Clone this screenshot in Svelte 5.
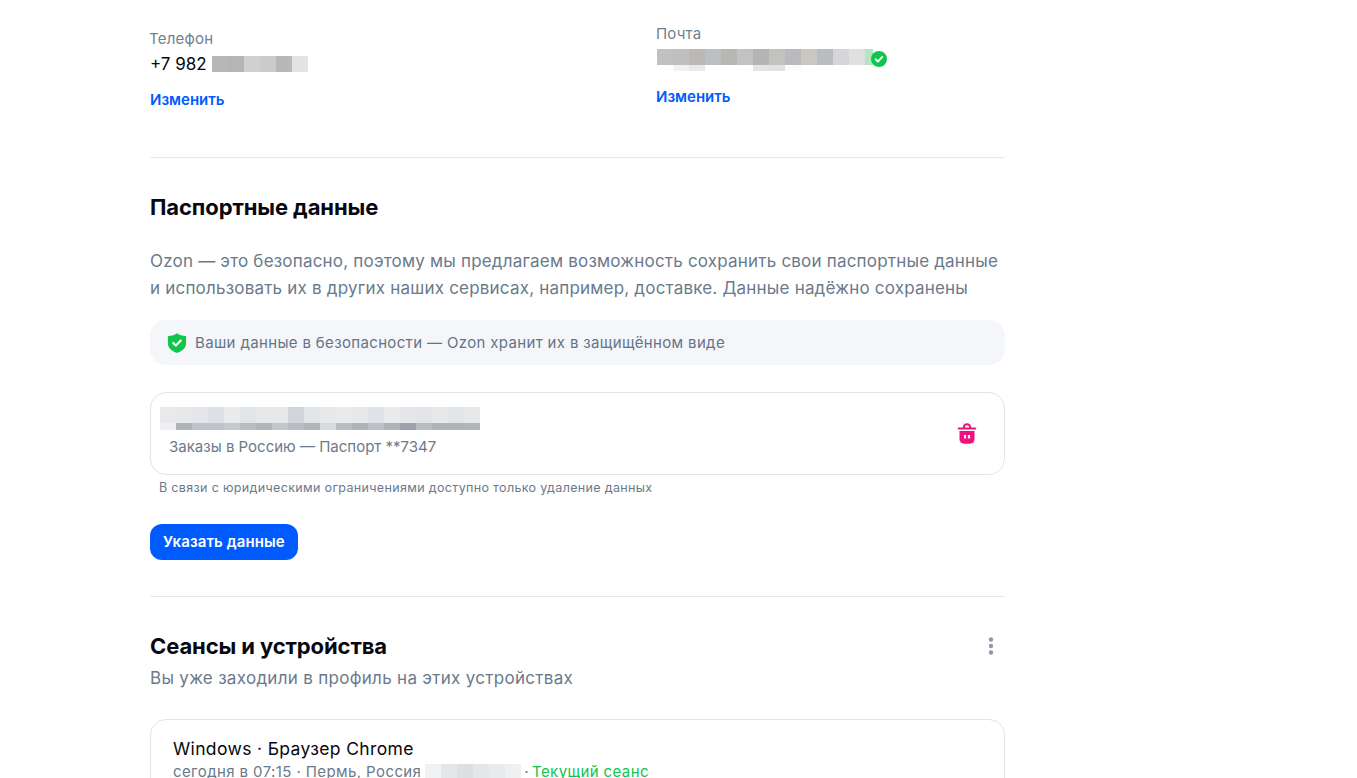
<script>
	const phoneCells = ["#b9b7b6", "#b4b5b6", "#d0d0d0", "#cbcbcb", "#b9b7b7", "#e3e3e4"];
	const mailTop = ["#c2c0c0", "#bfc0c2", "#bdb8b4", "#bcc0c2", "#b9b7b4", "#c2c2c2", "#b4b4b2", "#c4c2bf", "#b9babd", "#cbc7c0", "#b9bdc0", "#d6d6d9", "#e0e0e0"];
	const mailBottom = ["#fff", "#f2f2f2", "#e8e9ea", "#fff", "#fff", "#fff", "#e4e4e3", "#e2e1e0", "#fafbfc", "#fff", "#fff", "#fff", "#fff"];
	const nameTop = ["#e8e9eb", "#e6e8ea", "#e4e6e9", "#dde0e4", "#e8eaec", "#e2e5e8", "#e6e8ea", "#e6e8ea", "#d1d5d9", "#e2e5e8", "#e6e8ea", "#e8eaec", "#e6e8ea", "#dfe3e7", "#e8eaec", "#e4e6ea", "#e2e4e8", "#e6e8ea", "#e2e5e8", "#e6e8ea"];
	const nameBottom = ["#f0f0f2", "#aeb3ba", "#bec4cb", "#bec4cb", "#c4c9cf", "#b8bcc3", "#b0b5bc", "#c2c7ce", "#b8bdc4", "#b0b5bc", "#d8dbde", "#b8bdc4", "#aeb3ba", "#bac0c6", "#aeb3ba", "#9da3ae", "#b8bdc4", "#aeb3ba", "#aeb3ba", "#b0b5bc"];
	const ipCells = ["#f0f1f2", "#e4e6e8", "#dde0e3", "#e4e6e8", "#e8eaec", "#eef0f1"];
</script>

<main class="page">
	<section class="contacts">
		<div class="contact phone">
			<div class="label">Телефон</div>
			<div class="phone-value">
				<span>+7 982</span>
				<span class="blur">
					{#each phoneCells as c}<i style="background:{c}"></i>{/each}
				</span>
			</div>
			<a class="link" href="#phone">Изменить</a>
		</div>
		<div class="contact mail">
			<div class="label">Почта</div>
			<div class="mail-value">
				<div class="blur-stack">
					<span class="blur">
						{#each mailTop as c}<i style="background:{c}"></i>{/each}
						<i style="background:#b4e6c4; width:8px"></i>
					</span>
					<span class="blur thin">
						{#each mailBottom as c}<i style="background:{c}"></i>{/each}
					</span>
				</div>
				<svg class="check" width="16" height="16" viewBox="0 0 16 16">
					<circle cx="8" cy="8" r="8" fill="#10c44c" />
					<path d="M4.6 8.3l2.3 2.2 4.4-4.6" fill="none" stroke="#fff" stroke-width="1.9" stroke-linecap="round" stroke-linejoin="round" />
				</svg>
			</div>
			<a class="link" href="#mail">Изменить</a>
		</div>
	</section>

	<hr class="first-rule" />

	<section class="passport">
		<h2>Паспортные данные</h2>
		<p class="lead">Ozon — это безопасно, поэтому мы предлагаем возможность сохранить свои паспортные данные и использовать их в других наших сервисах, например, доставке. Данные надёжно сохранены</p>
		<div class="safe">
			<svg width="20" height="22" viewBox="0 0 20 22">
				<path d="M10 1.2c2.6 1.7 5.200 2.600 8.300 2.900.5.100.8.400.8.900v6c0 4.600-3.400 8-8.500 9.700-.4.100-.8.100-1.200 0C4.300 19 .9 15.600.9 11V5c0-.5.300-.8.800-.9 3.100-.3 5.700-1.200 8.300-2.900z" fill="#10c44c" />
				<path d="M6.200 10.900l2.700 2.600 4.900-5" fill="none" stroke="#fff" stroke-width="2.100" stroke-linecap="round" stroke-linejoin="round" />
			</svg>
			<span>Ваши данные в безопасности — Ozon хранит их в защищённом виде</span>
		</div>
		<div class="doc">
			<div class="doc-info">
				<div class="blur-stack name">
					<span class="blur">
						{#each nameTop as c}<i style="background:{c}"></i>{/each}
					</span>
					<span class="blur thin">
						{#each nameBottom as c}<i style="background:{c}"></i>{/each}
					</span>
				</div>
				<div class="doc-sub">Заказы в Россию — Паспорт **7347</div>
			</div>
			<svg class="trash" width="20" height="22" viewBox="0 0 20 22">
				<path d="M6.800 5c0-2.300 1.300-3.700 3.200-3.700s3.200 1.400 3.200 3.700" fill="none" stroke="#f1117e" stroke-width="2" />
				<path d="M1.800 5.500h16.400" stroke="#f1117e" stroke-width="2.200" stroke-linecap="round" />
				<path d="M2.500 8h15v8c0 2.800-1.900 4.700-4.700 4.700H7.200c-2.800 0-4.700-1.900-4.700-4.700z" fill="#f1117e" />
				<path d="M8 12v3.500M12 12v3.500" stroke="#fff" stroke-width="2.200" />
			</svg>
		</div>
		<div class="legal">В связи с юридическими ограничениями доступно только удаление данных</div>
		<button class="primary">Указать данные</button>
	</section>

	<hr class="second-rule" />

	<section class="sessions">
		<div class="sessions-head">
			<h2>Сеансы и устройства</h2>
			<svg width="8" height="20" viewBox="0 0 8 20">
				<circle cx="4" cy="3.500" r="2.200" fill="#8e98a8" />
				<circle cx="4" cy="10" r="2.200" fill="#8e98a8" />
				<circle cx="4" cy="16.500" r="2.200" fill="#8e98a8" />
			</svg>
		</div>
		<p class="sessions-sub">Вы уже заходили в профиль на этих устройствах</p>
		<div class="session">
			<div class="session-title">Windows · Браузер Chrome</div>
			<div class="session-meta">
				<span>сегодня в 07:15 · Пермь, Россия</span>
				<span class="blur ip">
					{#each ipCells as c}<i style="background:{c}"></i>{/each}
				</span>
				<span>·</span>
				<span class="current">Текущий сеанс</span>
			</div>
		</div>
	</section>
</main>

<style>
	:global(body) {
		margin: 0;
		background: #fff;
		overflow: hidden;
	}

	.page {
		box-sizing: border-box;
		width: 855px;
		height: 778px;
		margin-left: 150px;
		overflow: hidden;
		font-family: Inter, "Noto Sans", sans-serif;
		color: #001a34;
	}

	.contacts {
		display: grid;
		grid-template-columns: 506px 1fr;
		height: 157px;
	}

	.contact {
		display: flex;
		flex-direction: column;
		align-items: flex-start;
	}

	.phone {
		padding-top: 30px;
	}

	.mail {
		padding-top: 25px;
	}

	.label {
		font-size: 15px;
		line-height: 18px;
		letter-spacing: 0.200px;
		color: #707f8d;
		margin-left: -1px;
	}

	.mail .label {
		margin-left: 0;
	}

	.phone-value {
		display: flex;
		align-items: center;
		gap: 5px;
		height: 24px;
		margin-top: 4px;
		font-size: 17px;
		color: #07070f;
	}

	.mail-value {
		display: flex;
		height: 22px;
		margin-top: 6px;
		margin-left: 1px;
	}

	.blur {
		display: flex;
	}

	.blur i {
		display: block;
		width: 16px;
		height: 16px;
	}

	.blur.thin i {
		height: 6px;
	}

	.blur-stack {
		display: flex;
		flex-direction: column;
	}

	.check {
		margin: 2px 0 0 -2px;
	}

	.link {
		font-size: 15px;
		font-weight: 600;
		line-height: 20px;
		color: #005bff;
		text-decoration: none;
	}

	.phone .link {
		margin-top: 14px;
	}

	.mail .link {
		margin-top: 16px;
	}

	hr {
		height: 1px;
		margin: 0;
		border: 0;
		background: #e4e7ee;
	}

	.passport {
		height: 438px;
		padding-top: 35px;
		box-sizing: border-box;
	}

	h2 {
		margin: 0;
		font-size: 22px;
		font-weight: 700;
		line-height: 28px;
		letter-spacing: -0.100px;
		color: #07070f;
	}

	.lead {
		margin: 27px 0 0;
		font-size: 17px;
		line-height: 27px;
		letter-spacing: 0.200px;
		color: #6a7a8b;
	}

	.safe {
		display: flex;
		align-items: center;
		gap: 8px;
		height: 45px;
		margin-top: 18px;
		padding-left: 17px;
		border-radius: 16px;
		background: #f4f6fa;
		font-size: 15px;
		letter-spacing: 0.350px;
		color: #647486;
	}

	.doc {
		display: flex;
		align-items: flex-start;
		justify-content: space-between;
		box-sizing: border-box;
		height: 83px;
		margin-top: 27px;
		padding: 14px 27px 0 9px;
		border: 1px solid #e0e4ee;
		border-radius: 16px;
	}

	.doc-sub {
		margin-top: 7px;
		margin-left: 9px;
		font-size: 15px;
		line-height: 20px;
		color: #6a7a8b;
	}

	.name .blur.thin i {
		height: 7px;
	}

	.trash {
		margin-top: 16px;
	}

	.legal {
		margin-top: 4px;
		margin-left: 9px;
		font-size: 12.500px;
		line-height: 17px;
		letter-spacing: 0.340px;
		color: #6a7a8b;
	}

	.primary {
		display: block;
		height: 36px;
		margin-top: 28px;
		padding: 0 13px 2px;
		border: 0;
		border-radius: 12px;
		background: #005bff;
		color: #fff;
		font: 600 15px Inter, "Noto Sans", sans-serif;
		letter-spacing: 0.100px;
	}

	.sessions {
		padding-top: 35px;
	}

	.sessions-head {
		display: flex;
		align-items: center;
		justify-content: space-between;
		padding-right: 10px;
	}

	.sessions-sub {
		margin: 6px 0 0;
		font-size: 17px;
		line-height: 24px;
		letter-spacing: 0.300px;
		color: #6a7a8b;
	}

	.session {
		box-sizing: border-box;
		height: 120px;
		margin-top: 29px;
		padding: 17px 22px;
		border: 1px solid #e0e4ee;
		border-radius: 16px;
	}

	.session-title {
		margin-bottom: 1px;
		font-size: 17.500px;
		line-height: 24px;
		letter-spacing: 0.350px;
		color: #07070f;
	}

	.session-meta {
		display: flex;
		align-items: center;
		gap: 3px;
		font-size: 15px;
		line-height: 20px;
		letter-spacing: 0.400px;
		color: #6a7a8b;
	}

	.ip {
		margin-left: 1px;
	}

	.current {
		color: #10c44c;
	}
</style>
